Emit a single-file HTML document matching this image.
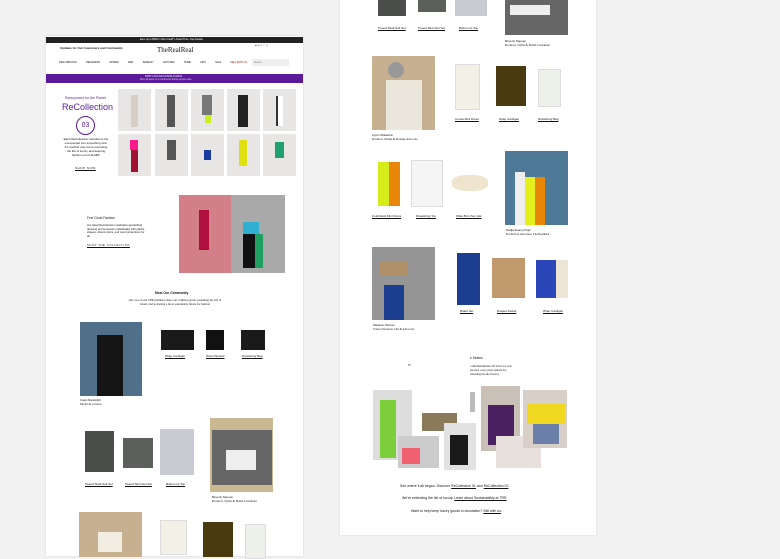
<!DOCTYPE html>
<html><head><meta charset="utf-8"><style>
*{margin:0;padding:0;box-sizing:border-box}
body{width:780px;height:551px;background:#f2f2f3;position:relative;overflow:hidden;font-family:"Liberation Sans",sans-serif;color:#111}
.p{position:absolute;background:#fff;box-shadow:0 0 2px rgba(0,0,0,.12)}
.a{position:absolute}
.t{position:absolute;font-size:3px;white-space:nowrap;line-height:1}
.lbl{position:absolute;font-size:3px;text-decoration:underline;white-space:nowrap;text-align:center}
.serif{font-family:"Liberation Serif",serif}
.ph{position:absolute;background:#e8e6e4}
.nav{position:absolute;left:59px;top:61px;width:188px;display:flex;justify-content:space-between;font-size:2.4px;white-space:nowrap}
</style></head><body>
<!-- LEFT PANEL -->
<div class="p" style="left:46px;top:36px;width:257px;height:520px"></div>
<div class="a" style="left:46px;top:37px;width:257px;height:6px;background:#222"></div>
<div class="t" style="left:140px;top:38.5px;color:#fff;font-size:2.5px">Earn up to $500 in Site Credit* Limited Time. See Details</div>
<div class="t" style="left:60px;top:47px;font-size:3px;font-weight:bold">Updates for Our Customers and Community</div>
<div class="t serif" style="left:157px;top:47px;font-size:7px">TheRealReal</div>
<div class="t" style="left:255px;top:45px;font-size:2.5px">● ◎ ◻ ♡ ◻</div>
<div class="nav"><span>NEW ARRIVALS</span><span>DESIGNERS</span><span>WOMEN</span><span>MEN</span><span>JEWELRY</span><span>WATCHES</span><span>HOME</span><span>KIDS</span><span>SALE</span><span style="color:#b00">SELL WITH US</span></div>
<div class="a" style="left:252px;top:59px;width:37px;height:7px;background:#eee"></div>
<div class="t" style="left:254px;top:61.5px;font-size:2.3px;color:#888">Search</div>
<div class="a" style="left:46px;top:74px;width:257px;height:9px;background:#5a1a9a"></div>
<div class="t" style="left:145px;top:75.5px;color:#fff;font-size:2.3px">FIRST LOOK EXCLUSIVE ACCESS</div>
<div class="t" style="left:140px;top:79px;color:#ddd;font-size:2.3px">Shop all items on a continuous before anyone else</div>
<div class="t" style="left:65px;top:97px;color:#5a1a9a;font-size:3.5px">Repurposed for the Planet</div>
<div class="t" style="left:62px;top:103px;color:#5a1a9a;font-size:9px">ReCollection</div>
<div class="a" style="left:76px;top:116px;width:19px;height:19px;border:1px solid #5a1a9a;border-radius:50%;color:#5a1a9a;font-size:7px;text-align:center;line-height:17px">03</div>
<div class="t" style="left:63px;top:137px;font-size:3px;line-height:4px;text-align:center;white-space:normal;width:46px">Each ReCollection transforms the unexpected into something new. It's another way we're extending the life of luxury and keeping fashion out of landfill.</div>
<div class="t" style="left:75px;top:167px;font-size:3px;text-decoration:underline;letter-spacing:.5px">SHOP NOW</div>
<!-- grid -->
<div class="ph" style="left:118px;top:89px;width:33px;height:42px"></div>
<div class="ph" style="left:155px;top:89px;width:33px;height:42px"></div>
<div class="ph" style="left:191px;top:89px;width:33px;height:42px"></div>
<div class="ph" style="left:227px;top:89px;width:33px;height:42px"></div>
<div class="ph" style="left:263px;top:89px;width:33px;height:42px"></div>
<div class="ph" style="left:118px;top:134px;width:33px;height:42px"></div>
<div class="ph" style="left:155px;top:134px;width:33px;height:42px"></div>
<div class="ph" style="left:191px;top:134px;width:33px;height:42px"></div>
<div class="ph" style="left:227px;top:134px;width:33px;height:42px"></div>
<div class="ph" style="left:263px;top:134px;width:33px;height:42px"></div>
<div class="a" style="left:131px;top:95px;width:7px;height:32px;background:#d8cfc4"></div>
<div class="a" style="left:167px;top:95px;width:8px;height:32px;background:#555"></div>
<div class="a" style="left:202px;top:95px;width:10px;height:20px;background:#777"></div>
<div class="a" style="left:205px;top:115px;width:6px;height:8px;background:#c8f020"></div>
<div class="a" style="left:238px;top:95px;width:10px;height:32px;background:#222"></div>
<div class="a" style="left:276px;top:96px;width:7px;height:30px;background:#fff;border-left:2px solid #333"></div>
<div class="a" style="left:130px;top:140px;width:8px;height:10px;background:#ff1a8c"></div>
<div class="a" style="left:131px;top:150px;width:7px;height:22px;background:#a01030"></div>
<div class="a" style="left:167px;top:140px;width:9px;height:20px;background:#555"></div>
<div class="a" style="left:204px;top:150px;width:7px;height:10px;background:#1a3aa0"></div>
<div class="a" style="left:239px;top:140px;width:8px;height:26px;background:#e0e010"></div>
<div class="a" style="left:275px;top:142px;width:9px;height:16px;background:#20a070"></div>
<!-- feel good -->
<div class="t" style="left:87px;top:217px;font-size:3.3px">Feel Good Fashion</div>
<div class="t" style="left:87px;top:224px;font-size:2.7px;line-height:3.5px;white-space:normal;width:58px" >Our latest ReCollection celebrates genderfluid dressing and empowers individuality with playful shapes, vibrant colors, and novel proportions for all.</div>
<div class="t" style="left:87px;top:245px;font-size:2.7px;text-decoration:underline;letter-spacing:.6px">SHOP THE COLLECTION</div>
<div class="a" style="left:179px;top:195px;width:52px;height:78px;background:#d27f88"></div>
<div class="a" style="left:231px;top:195px;width:54px;height:78px;background:#a9a9a9"></div>
<div class="a" style="left:199px;top:210px;width:10px;height:40px;background:#b01040"></div>
<div class="a" style="left:243px;top:222px;width:16px;height:12px;background:#30b0d0"></div>
<div class="a" style="left:243px;top:234px;width:12px;height:34px;background:#111"></div>
<div class="a" style="left:255px;top:234px;width:8px;height:34px;background:#20a060"></div>
<div class="t" style="left:155px;top:292px;font-size:3.3px;font-weight:bold">Meet Our Community</div>
<div class="t serif" style="left:126px;top:298px;font-size:3px;line-height:4px;text-align:center;width:98px;white-space:normal">Our cast of real TRR members share our common goals: extending the life of luxury and powering a more sustainable future for fashion</div>
<!-- imani -->
<div class="a" style="left:80px;top:322px;width:62px;height:74px;background:#4f7088"></div>
<div class="a" style="left:97px;top:335px;width:26px;height:61px;background:#151515"></div>
<div class="t" style="left:80px;top:399px;font-size:3px">Imani Randolph</div>
<div class="t serif" style="left:80px;top:403px;font-size:3px">Model & Creative</div>
<div class="a" style="left:161px;top:330px;width:33px;height:20px;background:#1a1a1a"></div>
<div class="a" style="left:206px;top:330px;width:18px;height:20px;background:#111"></div>
<div class="a" style="left:241px;top:330px;width:24px;height:20px;background:#1a1a1a"></div>
<div class="lbl" style="left:165px;top:354px">Wrap Cardigan</div>
<div class="lbl" style="left:206px;top:354px">Wool Pantsuit</div>
<div class="lbl" style="left:242px;top:354px">Drawstring Bag</div>
<!-- row2 -->
<div class="a" style="left:85px;top:431px;width:29px;height:41px;background:#4a4d4a"></div>
<div class="a" style="left:123px;top:438px;width:30px;height:30px;background:#5b605b"></div>
<div class="a" style="left:160px;top:429px;width:34px;height:46px;background:#c8ccd2"></div>
<div class="lbl" style="left:85px;top:482px">Tweed Shell Suit Set</div>
<div class="lbl" style="left:125px;top:482px">Tweed Skirt Suit Set</div>
<div class="lbl" style="left:166px;top:482px">Button-Up Top</div>
<div class="a" style="left:210px;top:418px;width:63px;height:74px;background:#c9b892"></div>
<div class="a" style="left:212px;top:430px;width:60px;height:55px;background:#666"></div>
<div class="a" style="left:226px;top:450px;width:30px;height:20px;background:#eee"></div>
<div class="t" style="left:212px;top:496px;font-size:3px">Beverly Nguyen</div>
<div class="t serif" style="left:212px;top:500px;font-size:3px">Producer, Stylist & Brand Consultant</div>
<!-- row3 -->
<div class="a" style="left:79px;top:512px;width:63px;height:45px;background:#c6b08f"></div>
<div class="a" style="left:98px;top:532px;width:24px;height:20px;background:#f2ede3"></div>
<div class="a" style="left:160px;top:520px;width:27px;height:35px;background:#f3f0e8;border:1px solid #ddd"></div>
<div class="a" style="left:203px;top:522px;width:30px;height:35px;background:#4a3a10"></div>
<div class="a" style="left:245px;top:524px;width:21px;height:35px;background:#eef0ea;border:1px solid #ddd"></div>
<!-- RIGHT PANEL -->
<div class="p" style="left:340px;top:-5px;width:256px;height:540px"></div>
<div class="a" style="left:378px;top:0px;width:28px;height:16px;background:#4a4d4a"></div>
<div class="a" style="left:418px;top:0px;width:28px;height:12px;background:#5b605b"></div>
<div class="a" style="left:455px;top:0px;width:32px;height:16px;background:#c8ccd2"></div>
<div class="lbl" style="left:378px;top:26px">Tweed Shell Suit Set</div>
<div class="lbl" style="left:418px;top:26px">Tweed Skirt Suit Set</div>
<div class="lbl" style="left:459px;top:26px">Button-Up Top</div>
<div class="a" style="left:505px;top:0px;width:63px;height:35px;background:#666"></div>
<div class="a" style="left:510px;top:5px;width:40px;height:10px;background:#eee"></div>
<div class="t" style="left:505px;top:40px;font-size:3px">Beverly Nguyen</div>
<div class="t serif" style="left:505px;top:44px;font-size:3px">Producer, Stylist & Brand Consultant</div>
<div class="a" style="left:372px;top:56px;width:63px;height:74px;background:#c6b08f"></div>
<div class="a" style="left:386px;top:80px;width:36px;height:50px;background:#ece7dc"></div>
<div class="a" style="left:388px;top:62px;width:16px;height:16px;border-radius:50%;background:#999"></div>
<div class="t" style="left:372px;top:134px;font-size:3px">Kyoni Wikawha</div>
<div class="t serif" style="left:372px;top:138px;font-size:3px">Producer, Model & Prestige Advocate</div>
<div class="a" style="left:455px;top:64px;width:25px;height:46px;background:#f3f0e8;border:1px solid #ddd"></div>
<div class="a" style="left:496px;top:66px;width:30px;height:40px;background:#4a3a10"></div>
<div class="a" style="left:538px;top:69px;width:23px;height:38px;background:#eef0ea;border:1px solid #ddd"></div>
<div class="lbl" style="left:455px;top:117px">Corset Mini Dress</div>
<div class="lbl" style="left:499px;top:117px">Wrap Cardigan</div>
<div class="lbl" style="left:538px;top:117px">Drawstring Bag</div>
<div class="a" style="left:378px;top:162px;width:11px;height:44px;background:#d5ec1a"></div>
<div class="a" style="left:389px;top:162px;width:11px;height:44px;background:#e8860a"></div>
<div class="a" style="left:411px;top:160px;width:32px;height:47px;background:#f5f5f5;border:1px solid #ddd"></div>
<div class="a" style="left:452px;top:175px;width:36px;height:16px;background:#efe5cf;border-radius:40%"></div>
<div class="lbl" style="left:372px;top:214px">Colorblock Mini Dress</div>
<div class="lbl" style="left:416px;top:214px">Drawstring Top</div>
<div class="lbl" style="left:456px;top:214px">Wide Brim Sun Hat</div>
<div class="a" style="left:505px;top:151px;width:63px;height:74px;background:#4e7a98"></div>
<div class="a" style="left:515px;top:172px;width:10px;height:53px;background:#eee"></div>
<div class="a" style="left:525px;top:177px;width:10px;height:48px;background:#e6ef1e"></div>
<div class="a" style="left:535px;top:177px;width:10px;height:48px;background:#e8860a"></div>
<div class="t" style="left:506px;top:229px;font-size:3px">Nadja Ifeanyi Pejic</div>
<div class="t serif" style="left:506px;top:233px;font-size:3px">Production Associate, The RealReal</div>
<div class="a" style="left:372px;top:247px;width:63px;height:73px;background:#959595"></div>
<div class="a" style="left:380px;top:262px;width:28px;height:14px;background:#b09068"></div>
<div class="a" style="left:384px;top:285px;width:20px;height:35px;background:#1c3e8e"></div>
<div class="t" style="left:373px;top:324px;font-size:3px">Madison Werner</div>
<div class="t serif" style="left:373px;top:328px;font-size:3px">Trans Liberation Cult & Advocate</div>
<div class="a" style="left:457px;top:253px;width:23px;height:52px;background:#1c3e90"></div>
<div class="a" style="left:492px;top:258px;width:33px;height:40px;background:#c09a6c"></div>
<div class="a" style="left:536px;top:260px;width:20px;height:38px;background:#2a46b8"></div>
<div class="a" style="left:556px;top:260px;width:12px;height:38px;background:#ede6d6"></div>
<div class="lbl" style="left:460px;top:309px">Bralet Set</div>
<div class="lbl" style="left:497px;top:309px">Draped Jacket</div>
<div class="lbl" style="left:543px;top:309px">Wrap Cardigan</div>
<div class="t" style="left:470px;top:357px;font-size:3.3px">s Seams</div>
<div class="t" style="left:408px;top:365px;font-size:2.5px">Th</div>
<div class="t" style="left:470px;top:365px;font-size:2.5px;line-height:3.8px">n with ReCollection 03. From our new<br>services, every piece reflects our<br>extending the life of luxury.</div>
<!-- collage -->
<div class="a" style="left:373px;top:390px;width:39px;height:70px;background:#ddd"></div>
<div class="a" style="left:380px;top:400px;width:16px;height:58px;background:#7ccf3a"></div>
<div class="a" style="left:422px;top:413px;width:35px;height:18px;background:#8a7a5a"></div>
<div class="a" style="left:470px;top:392px;width:5px;height:20px;background:#bbb"></div>
<div class="a" style="left:398px;top:436px;width:41px;height:32px;background:#ccc"></div>
<div class="a" style="left:402px;top:448px;width:18px;height:16px;background:#f06070"></div>
<div class="a" style="left:444px;top:423px;width:32px;height:47px;background:#e2e2e2"></div>
<div class="a" style="left:450px;top:435px;width:18px;height:30px;background:#1a1a1a"></div>
<div class="a" style="left:481px;top:386px;width:39px;height:65px;background:#c9c0b8"></div>
<div class="a" style="left:488px;top:405px;width:26px;height:40px;background:#4a2060"></div>
<div class="a" style="left:496px;top:436px;width:45px;height:32px;background:#e8e0dc"></div>
<div class="a" style="left:523px;top:390px;width:44px;height:58px;background:#d8d0c8"></div>
<div class="a" style="left:527px;top:404px;width:38px;height:20px;background:#f0d820"></div>
<div class="a" style="left:533px;top:424px;width:26px;height:20px;background:#6a80a8"></div>
<div class="t" style="left:400px;top:485px;font-size:3.5px">See where it all began. Discover <u>ReCollection 01</u> and <u>ReCollection 02</u>.</div>
<div class="t" style="left:402px;top:497px;font-size:3.5px">We're extending the life of luxury. <u>Learn about Sustainability at TRR</u>.</div>
<div class="t" style="left:411px;top:510px;font-size:3.5px">Want to help keep luxury goods in circulation? <u>Sell with us</u>.</div>
</body></html>
